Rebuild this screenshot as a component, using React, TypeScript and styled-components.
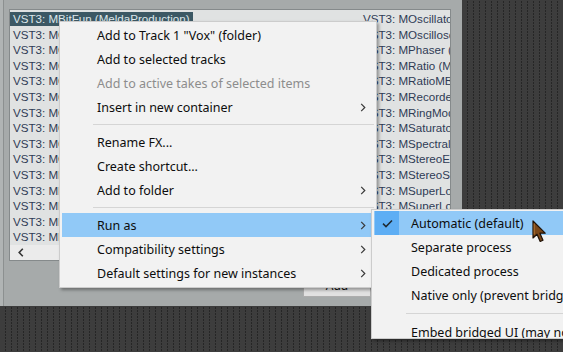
import React from 'react'
import styled, { createGlobalStyle } from 'styled-components'

const GlobalStyle = createGlobalStyle`
  html, body {
    margin: 0;
    padding: 0;
    background: #3e3e3e;
  }
  * {
    box-sizing: border-box;
  }
`

const leftItems = [
  'VST3: MBitFun (MeldaProduction)',
  'VST3: MCCGenerator (MeldaProduction)',
  'VST3: MCharacter (MeldaProduction)',
  'VST3: MCharger (MeldaProduction)',
  'VST3: MChorus (MeldaProduction)',
  'VST3: MComb (MeldaProduction)',
  'VST3: MCompare (MeldaProduction)',
  'VST3: MCompressor (MeldaProduction)',
  'VST3: MConvolutionEZ (MeldaProduction)',
  'VST3: MConvolutionMB (MeldaProduction)',
  'VST3: MDrumLeveler (MeldaProduction)',
  'VST3: MDynamics (MeldaProduction)',
  'VST3: MDynamicsMB (MeldaProduction)',
  'VST3: MEnvelopeFollower (MeldaProduction)',
  'VST3: MEqualizer (MeldaProduction)',
]

const rightItems = [
  'VST3: MOscillator (MeldaProduction)',
  'VST3: MOscilloscope (MeldaProduction)',
  'VST3: MPhaser (MeldaProduction)',
  'VST3: MRatio (MeldaProduction)',
  'VST3: MRatioMB (MeldaProduction)',
  'VST3: MRecorder (MeldaProduction)',
  'VST3: MRingModulator (MeldaProduction)',
  'VST3: MSaturator (MeldaProduction)',
  'VST3: MSpectralDynamics (MeldaProduction)',
  'VST3: MStereoExpander (MeldaProduction)',
  'VST3: MStereoScope (MeldaProduction)',
  'VST3: MSuperLooper (MeldaProduction)',
  'VST3: MSuperLooperEx (MeldaProduction)',
  'VST3: MTransformer (MeldaProduction)',
  'VST3: MTremolo (MeldaProduction)',
]

type Entry = { label?: string; sub?: boolean; disabled?: boolean; active?: boolean; sep?: boolean }

const mainMenu: Entry[] = [
  { label: 'Add to Track 1 "Vox" (folder)' },
  { label: 'Add to selected tracks' },
  { label: 'Add to active takes of selected items', disabled: true },
  { label: 'Insert in new container', sub: true },
  { sep: true },
  { label: 'Rename FX...' },
  { label: 'Create shortcut...' },
  { label: 'Add to folder', sub: true },
  { sep: true },
  { label: 'Run as', sub: true, active: true },
  { label: 'Compatibility settings', sub: true },
  { label: 'Default settings for new instances', sub: true },
]

const runAsMenu = ['Automatic (default)', 'Separate process', 'Dedicated process', 'Native only (prevent bridging)']

const Chevron = () => (
  <svg width="6" height="9" viewBox="0 0 6 9">
    <path d="M1.2 0.8 L4.8 4.5 L1.2 8.2" fill="none" stroke="#3a3a3a" strokeWidth="1.2" />
  </svg>
)

const Check = () => (
  <svg width="11" height="9" viewBox="0 0 11 9">
    <path d="M1 4.6 L4 7.6 L10 1.4" fill="none" stroke="#1f2a33" strokeWidth="1.5" />
  </svg>
)

const Screen = styled.div`
  position: relative;
  width: 563px;
  height: 352px;
  overflow: hidden;
  background-color: #3d3d3d;
  background-image: repeating-linear-gradient(180deg, #3d3d3d 0 1px, transparent 1px 3px),
    repeating-linear-gradient(90deg, #3d3d3d 0 5px, #262626 5px 6px);
`

const Dialog = styled.div`
  width: 462px;
  height: 306px;
  background: #a6aaaa;
  padding: 9px 11px 0 9px;
  display: flex;
  flex-direction: column;
  border-left: 3px solid #b0b4b4;
  box-shadow: inset 1px 0 0 #8c9090;
`

const ListBox = styled.div`
  height: 252px;
  margin-left: -3px;
  border: 1px solid #858a8b;
  background: #e0e2e2;
  display: flex;
  flex-direction: column;
  overflow: hidden;
`

const Columns = styled.div`
  flex: 1;
  display: grid;
  grid-template-columns: repeat(2, 350px);
  grid-template-rows: repeat(15, 15.6px);
  grid-auto-flow: column;
  padding-top: 1px;
  overflow: hidden;
`

const Row = styled.div`
  white-space: nowrap;
  overflow: hidden;
  font-family: 'Liberation Sans', Arial, sans-serif;
  font-size: 11.6px;
  line-height: 15.6px;
  color: #2f3b55;
`

const Label = styled.span<{ $selected?: boolean }>`
  display: inline-block;
  height: 14px;
  line-height: 14px;
  padding: 0 3px;
  background: ${(p) => (p.$selected ? '#3c5864' : 'transparent')};
  color: ${(p) => (p.$selected ? '#dde7eb' : 'inherit')};
`

const ScrollBar = styled.div`
  height: 15px;
  background: #ebebeb;
  display: flex;
  align-items: center;
  padding-left: 8px;
`

const Footer = styled.div`
  display: flex;
  justify-content: flex-end;
  gap: 12px;
  padding-top: 13px;
`

const Button = styled.div`
  width: 68px;
  height: 23px;
  background: #e1e1e1;
  border: 1px solid #adadad;
  display: flex;
  align-items: center;
  justify-content: center;
  font-family: 'Noto Sans', sans-serif;
  font-size: 12px;
  color: #111;
`

const Menu = styled.div<{ $left: number; $top: number; $width: number; $height?: number }>`
  position: absolute;
  left: ${(p) => p.$left}px;
  top: ${(p) => p.$top}px;
  width: ${(p) => p.$width}px;
  height: ${(p) => (p.$height ? `${p.$height}px` : 'auto')};
  overflow: hidden;
  background: #f2f2f2;
  border: 1px solid #cccccc;
  padding: 1px 2px 2px 2px;
  box-shadow: 2px 2px 3px rgba(0, 0, 0, 0.35);
  font-family: 'Noto Sans', sans-serif;
  font-size: 12.5px;
`

const Item = styled.div<{ $active?: boolean; $disabled?: boolean }>`
  display: grid;
  grid-template-columns: 35px 1fr 22px;
  align-items: center;
  height: 24px;
  white-space: nowrap;
  color: ${(p) => (p.$disabled ? '#8d8d8d' : '#0d0d0d')};
  background: ${(p) => (p.$active ? '#91c9f7' : 'transparent')};
`

const SubItem = styled(Item)`
  grid-template-columns: 37px 1fr;
`

const Arrow = styled.span`
  display: flex;
  justify-content: center;
`

const CheckCell = styled.span<{ $on?: boolean }>`
  display: flex;
  align-items: center;
  justify-content: center;
  width: 24px;
  height: 24px;
  margin-left: 1px;
  background: ${(p) => (p.$on ? '#5eaef4' : 'transparent')};
`

const Separator = styled.div<{ $indent?: number; $height?: number }>`
  height: ${(p) => p.$height ?? 11}px;
  display: flex;
  align-items: center;
  padding-left: ${(p) => p.$indent ?? 31}px;
  &::after {
    content: '';
    flex: 1;
    height: 1px;
    background: #d5d5d5;
  }
`

const Cursor = styled.svg`
  position: absolute;
  left: 532px;
  top: 220px;
`

export default function App() {
  return (
    <>
      <GlobalStyle />
      <Screen>
        <Dialog>
          <ListBox>
            <Columns>
              {[...leftItems, ...rightItems].map((name, i) => (
                <Row key={i}>
                  <Label $selected={i === 0}>{name}</Label>
                </Row>
              ))}
            </Columns>
            <ScrollBar>
              <svg width="6" height="9" viewBox="0 0 6 9">
                <path d="M4.8 0.8 L1.2 4.5 L4.8 8.2" fill="none" stroke="#333" strokeWidth="1.6" />
              </svg>
            </ScrollBar>
          </ListBox>
          <Footer>
            <Button>Add</Button>
            <Button>Close</Button>
          </Footer>
        </Dialog>

        <Menu $left={59} $top={21} $width={318}>
          {mainMenu.map((e, i) =>
            e.sep ? (
              <Separator key={i} />
            ) : (
              <Item key={i} $active={e.active} $disabled={e.disabled}>
                <span />
                <span>{e.label}</span>
                <Arrow>{e.sub && <Chevron />}</Arrow>
              </Item>
            )
          )}
        </Menu>

        <Menu $left={371} $top={209} $width={240} $height={130}>
          {runAsMenu.map((label, i) => (
            <SubItem key={label} $active={i === 0}>
              {i === 0 ? (
                <CheckCell $on>
                  <Check />
                </CheckCell>
              ) : (
                <span />
              )}
              <span>{label}</span>
            </SubItem>
          ))}
          <Separator $indent={32} $height={13} />
          <SubItem>
            <span />
            <span>Embed bridged UI (may not work)</span>
          </SubItem>
        </Menu>

        <Cursor width="16" height="24" viewBox="0 0 16 24">
          <path
            d="M1 1 L1 18 L5 14.2 L8.2 21.5 L11 20.3 L7.9 13.2 L13.2 13.2 Z"
            fill="#7a4719"
            stroke="#1e1208"
            strokeWidth="1.2"
            strokeLinejoin="round"
          />
          <path d="M2.2 3.5 L2.2 14.5" stroke="#b07436" strokeWidth="1" />
        </Cursor>
      </Screen>
    </>
  )
}
